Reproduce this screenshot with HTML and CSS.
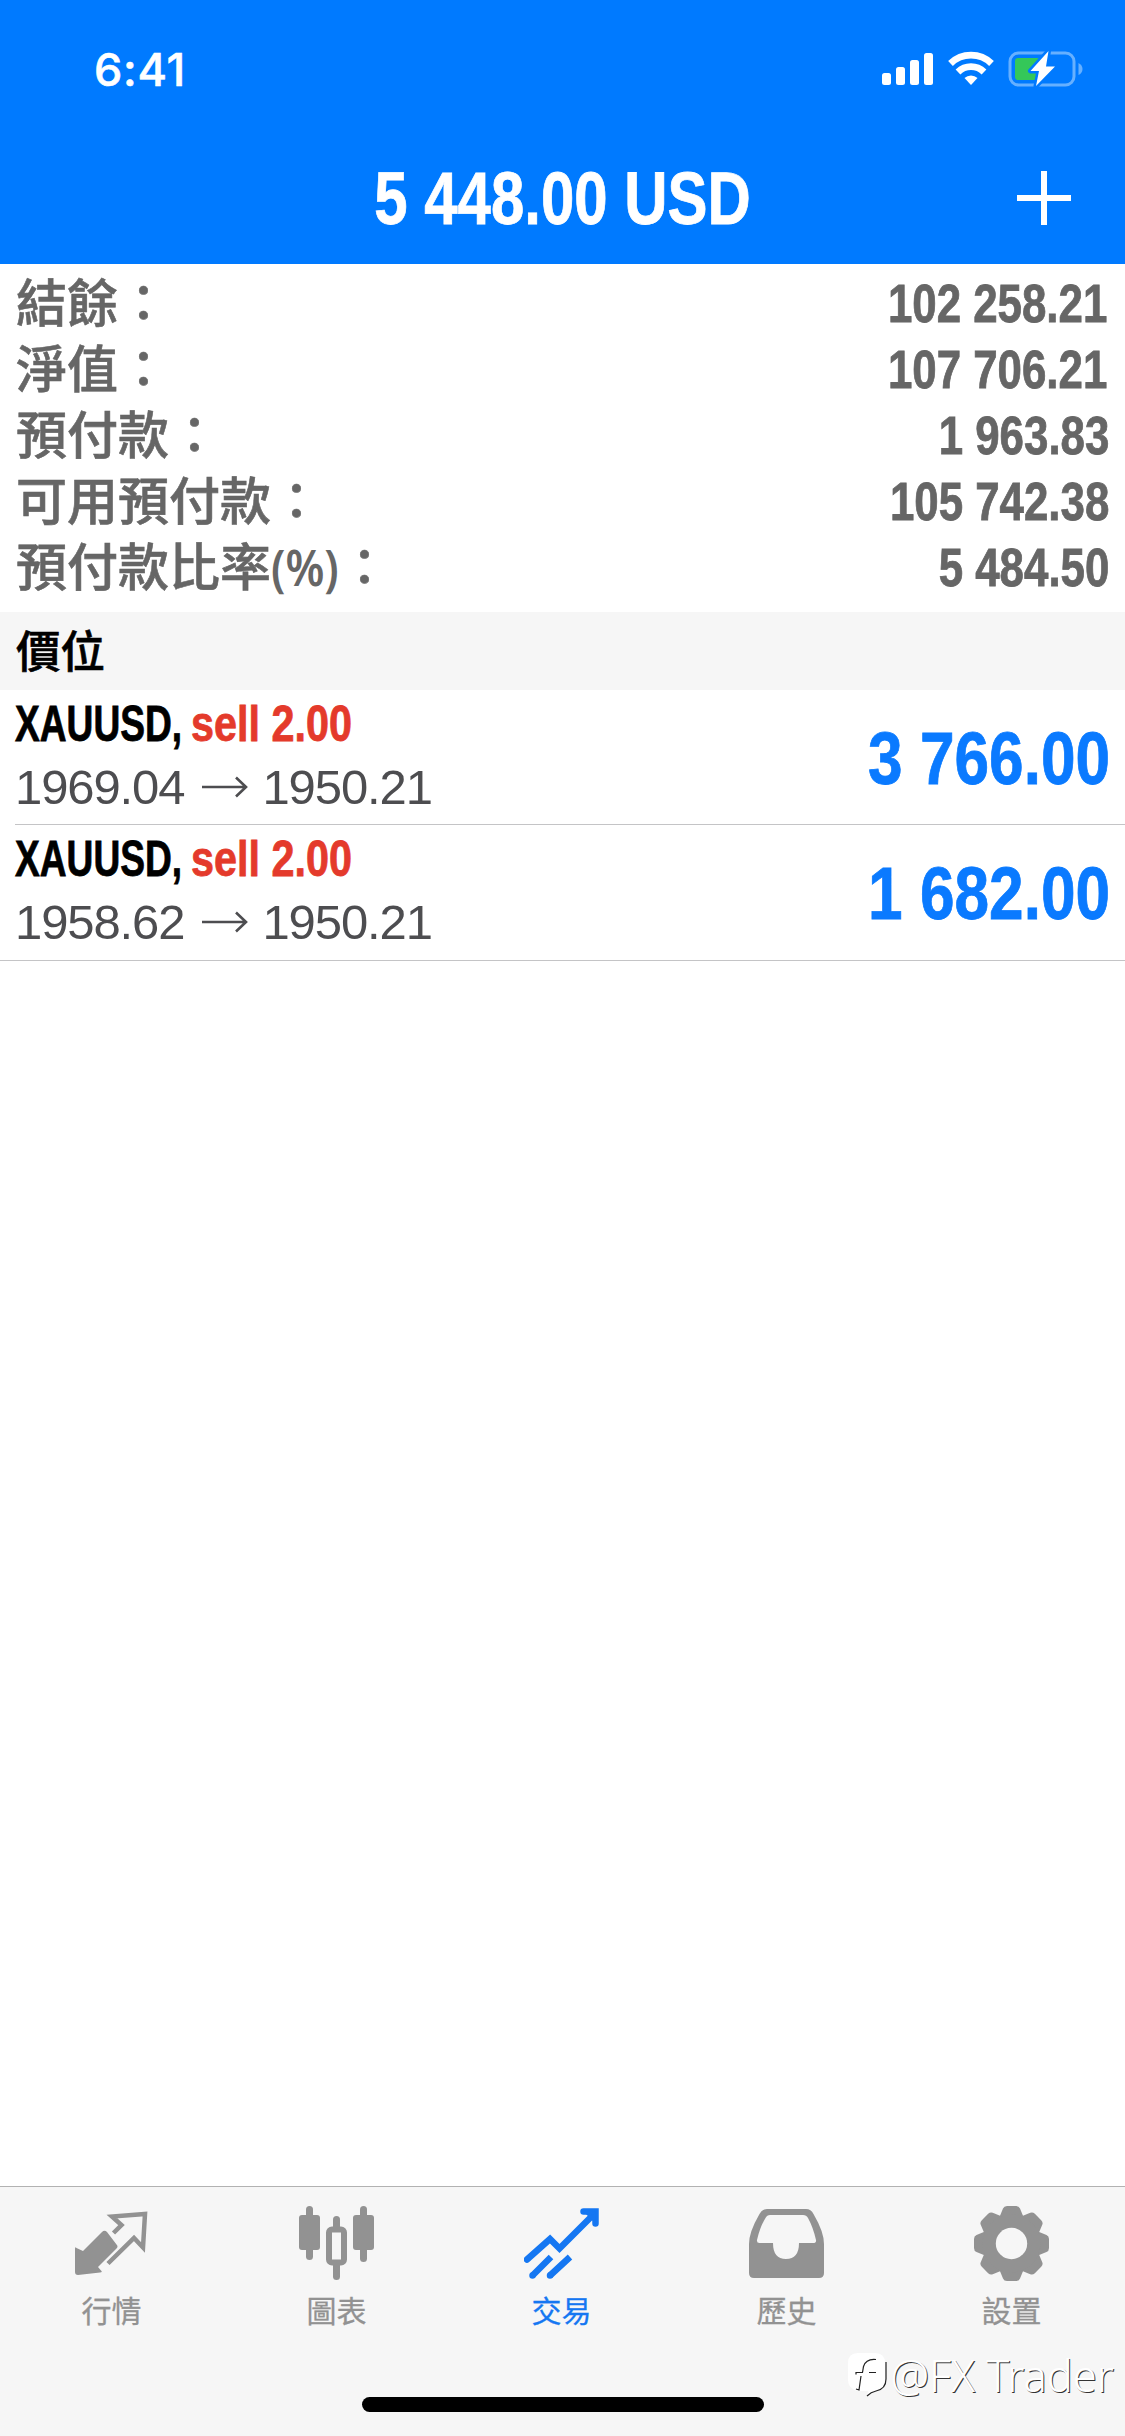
FILE: index.html
```html
<!DOCTYPE html>
<html lang="zh-Hant">
<head>
<meta charset="utf-8">
<title>交易</title>
<link rel="stylesheet" href="styles.css">
</head>
<body>
<div class="app">
  <header class="header">
    <div class="status">
      <span class="time">6:41</span>
      <svg class="status-icons" viewBox="0 0 202 40" width="202" height="40">
        <g fill="#fff">
          <rect x="0" y="24" width="9" height="12" rx="2.5"/>
          <rect x="14" y="18" width="9" height="18" rx="2.5"/>
          <rect x="28" y="11" width="9" height="25" rx="2.5"/>
          <rect x="42" y="4" width="9" height="32" rx="2.5"/>
          <path d="M89 36l-6.500-7a9.500 9.500 0 0 1 13 0z"/>
        </g>
        <g fill="none" stroke="#fff" stroke-width="6.800">
          <path d="M68.500 14.500a29.500 29.500 0 0 1 41 0"/>
          <path d="M76 23a18.500 18.500 0 0 1 26 0"/>
        </g>
        <rect x="128" y="4" width="64" height="32" rx="8.500" fill="none" stroke="#66b0ff" stroke-width="3"/>
        <path d="M196.500 14q4 2 4 6t-4 6z" fill="#66b0ff"/>
        <rect x="133" y="9" width="25" height="22" rx="3" fill="#34c759"/>
        <path d="M166.500 2L148.500 22h8.500l-3 15L173 17.500h-9z" fill="#fff" stroke="#007aff" stroke-width="5" stroke-linejoin="round" paint-order="stroke"/>
      </svg>
    </div>
    <div class="titlebar">
      <h1 class="narrow title">5 448.00 USD</h1>
      <svg class="plus" viewBox="0 0 54 54" width="54" height="54"><path d="M27 0v54M0 27h54" stroke="#fff" stroke-width="6"/></svg>
    </div>
  </header>

  <section class="summary">
    <div class="line"><span class="label">結餘：</span><span class="narrow amount ends-one">102 258.21</span></div>
    <div class="line"><span class="label">淨值：</span><span class="narrow amount ends-one">107 706.21</span></div>
    <div class="line"><span class="label">預付款：</span><span class="narrow amount">1 963.83</span></div>
    <div class="line"><span class="label">可用預付款：</span><span class="narrow amount">105 742.38</span></div>
    <div class="line"><span class="label">預付款比率<span class="pct">(%)</span>：</span><span class="narrow amount">5 484.50</span></div>
  </section>

  <h2 class="section">價位</h2>

  <main class="positions">
    <article class="position">
      <div class="info">
        <div class="deal"><span class="narrow symbol">XAUUSD,</span><span class="narrow side">sell 2.00</span></div>
        <div class="prices"><span>1969.04</span><svg class="arrow" viewBox="0 0 46 22" width="46" height="22"><path d="M0 11h44M34 1.500l10 9.500-10 9.500" fill="none" stroke="#4d4d50" stroke-width="2.600"/></svg><span>1950.21</span></div>
      </div>
      <div class="narrow profit">3 766.00</div>
    </article>
    <article class="position">
      <div class="info">
        <div class="deal"><span class="narrow symbol">XAUUSD,</span><span class="narrow side">sell 2.00</span></div>
        <div class="prices"><span>1958.62</span><svg class="arrow" viewBox="0 0 46 22" width="46" height="22"><path d="M0 11h44M34 1.500l10 9.500-10 9.500" fill="none" stroke="#4d4d50" stroke-width="2.600"/></svg><span>1950.21</span></div>
      </div>
      <div class="narrow profit">1 682.00</div>
    </article>
  </main>

  <footer class="footer">
    <nav class="tabs">
      <a class="tab">
        <svg viewBox="0 0 75 75" width="75" height="75">
          <path d="M2.500 42q-1.500-2-1.500 1v23q0 3 3 3l22-2.500q3-.5 1-2l-3-3.500 18.500-18.500q2-2 0-4L33 26q-2.500-2.500-5 0L9 45z" fill="#929292"/>
          <path d="M39.500 27l8-8-9.500-8.500 33-2.500-2 33.500-9-9.500L34 57.500" fill="none" stroke="#929292" stroke-width="4.500"/>
        </svg>
        <span>行情</span>
      </a>
      <a class="tab">
        <svg viewBox="0 0 75 75" width="75" height="75" fill="#929292">
          <rect x="0" y="9" width="21" height="35" rx="3"/><rect x="7" y="0" width="7" height="54" rx="3.500"/>
          <rect x="54" y="9" width="21" height="35" rx="3"/><rect x="61" y="0" width="7" height="56" rx="3.500"/>
          <rect x="34" y="10" width="7" height="16" rx="3.500"/><rect x="34" y="54" width="7" height="20" rx="3.500"/>
          <rect x="30" y="23.500" width="15" height="33" rx="3" fill="none" stroke="#929292" stroke-width="6"/>
        </svg>
        <span>圖表</span>
      </a>
      <a class="tab active">
        <svg viewBox="0 0 75 75" width="75" height="75" fill="none" stroke="#1577f2" stroke-width="6.500" stroke-linecap="round">
          <path d="M3 53.500L26 33l9.500 9.500L70 8"/><path d="M59.500 5.500h12v12"/><path d="M70 7l-8-1 8 8z" stroke-width="3" fill="#1577f2"/>
          <path d="M8.500 69.500L27 51M26 69.500L46 51" stroke-linecap="butt"/><path d="M8.500 69.500h0M26 69.500h0"/>
        </svg>
        <span>交易</span>
      </a>
      <a class="tab">
        <svg viewBox="0 0 75 75" width="75" height="75">
          <path fill-rule="evenodd" fill="#929292" d="M18 3h39q5 0 7.500 5Q75 26 75 38v29q0 5-5 5H5q-5 0-5-5V38Q0 26 10.500 8 13 3 18 3zM21 9q-3 0-4.500 3Q11 21 8 34q-.5 3 2.500 3H24q0 16 13 16t13-16h14q3.500 0 3-3-3-13-8-22-1.500-3-5-3z"/>
        </svg>
        <span>歷史</span>
      </a>
      <a class="tab">
        <svg viewBox="-37.500 -37.500 75 75" width="75" height="75">
          <g fill="#929292">
            <g id="teeth"><path id="cog" d="M-13-24L-8.500-35q1-2.500 4-2.500h9q3 0 4 2.500L13-24v48L8.500 35q-1 2.500-4 2.500h-9q-3 0-4-2.500L-13 24z"/><use href="#cog" transform="rotate(90)"/></g>
            <use href="#teeth" transform="rotate(45)"/>
            <circle r="29"/>
          </g>
          <circle r="15.700" fill="#f6f6f6"/>
        </svg>
        <span>設置</span>
      </a>
    </nav>
    <div class="home"></div>
    <div class="watermark">
      <svg viewBox="0 0 43 46" width="43" height="46">
        <path d="M11 1h17q10 0 10 10v16q0 9-9 12l-9 5 1-5H11Q1 37 1 28V11Q1 1 11 1z" fill="#fff"/>
        <path d="M39 10v17q0 10-10 12-5 1-9 5" fill="none" stroke="#222" stroke-width="1.200"/>
        <path d="M29 7.500q-10-1-12.500 7l-1 6H9v2M29 20.500h-7M14 24l-2 14-3-1" fill="none" stroke="#222" stroke-width="1.200"/>
      </svg>
      <span>@FX Trader</span>
    </div>
  </footer>
</div>
</body>
</html>
```
FILE: styles.css
```css
* { box-sizing: border-box; margin: 0; padding: 0; }
body { background: #fff; }
.app {
  width: 1125px;
  height: 2436px;
  display: flex;
  flex-direction: column;
  font-family: "Liberation Sans", "Noto Sans CJK TC", sans-serif;
  background: #fff;
  overflow: hidden;
}

/* Condensed bold figures */
.narrow {
  display: inline-block;
  font-family: "Liberation Sans", sans-serif;
  font-weight: 700;
  white-space: nowrap;
  -webkit-text-stroke: .8px currentColor;
}

.header { height: 264px; background: #007aff; color: #fff; }
.status {
  height: 132px;
  padding: 50px 41px 0 94px;
  display: flex;
  justify-content: space-between;
}
.time { font: 500 45px/40px Inter, sans-serif; letter-spacing: .7px; -webkit-text-stroke: .6px currentColor; }
.status-icons { margin-top: -1px; }
.titlebar {
  height: 132px;
  display: grid;
  grid-template-columns: 162px 1fr 162px;
  align-items: center;
}
.title {
  grid-column: 2;
  padding-top: 2px;
  font-size: 74px;
  line-height: 130px;
  text-align: center;
  transform: scaleX(.81);
}
.plus { justify-self: center; }

.summary { height: 348px; padding: 6px 16px 0; color: #666; }
.line {
  height: 66px;
  display: flex;
  justify-content: space-between;
  font: 500 51px/66px "Noto Sans CJK TC", sans-serif;
}
.label { line-height: 60px; -webkit-text-stroke: .6px currentColor; }
.pct {
  display: inline-block;
  width: 68px;
  font: 600 50px/60px "Noto Sans", sans-serif;
  -webkit-text-stroke: 0;
  transform: scaleX(.89);
  transform-origin: left;
}
.amount { padding-top: 1px; font-size: 53px; line-height: 66px; transform: scaleX(.827); transform-origin: right; }
.ends-one { margin-right: 2px; }

.section {
  height: 78px;
  padding-left: 16px;
  background: #f6f6f6;
  font: 500 44.500px/74px "Noto Sans CJK TC", sans-serif;
  color: #000;
  -webkit-text-stroke: .6px currentColor;
}

.positions { flex: 1; }
.position {
  height: 135px;
  margin-left: 15px;
  padding-right: 15px;
  border-bottom: 1px solid #c4c4c6;
  display: flex;
  justify-content: space-between;
}
.position:last-child { margin-left: 0; padding-left: 15px; height: 136px; }
.info { display: flex; flex-direction: column; }
.deal { height: 64px; padding-top: 5px; display: flex; font-size: 49.500px; line-height: 58px; }
.symbol { width: 176px; transform: scaleX(.75); transform-origin: left; }
.side { color: #e43a2b; transform: scaleX(.835); transform-origin: left; }
.prices {
  height: 66px;
  display: flex;
  align-items: center;
  font-size: 49px;
  line-height: 66px;
  letter-spacing: -1.100px;
  color: #4d4d50;
}
.arrow { margin: 0 14px 0 18px; }
.profit { padding-top: 1px; font-size: 74px; line-height: 135px; color: #0a7aff; transform: scaleX(.84); transform-origin: right; }

.footer {
  position: relative;
  height: 250px;
  border-top: 1px solid #b2b2b2;
  background: #f6f6f6;
}
.tabs { display: grid; grid-template-columns: repeat(5, 225px); margin-left: -1px; padding-top: 19px; }
.tab {
  display: flex;
  flex-direction: column;
  align-items: center;
  gap: 6px;
  color: #929292;
  font: 400 30px/44px "Noto Sans CJK TC", sans-serif;
  -webkit-text-stroke: .3px currentColor;
}
.active { color: #1577f2; }
.home { width: 402px; height: 15px; margin: 66px auto 0; border-radius: 8px; background: #000; }
.watermark {
  position: absolute;
  right: 11px;
  top: 165px;
  display: flex;
  align-items: center;
  color: #fff;
  font: 300 43.500px/46px "Noto Sans", sans-serif;
  text-shadow: 1px 1px 0 #333;
}
```
